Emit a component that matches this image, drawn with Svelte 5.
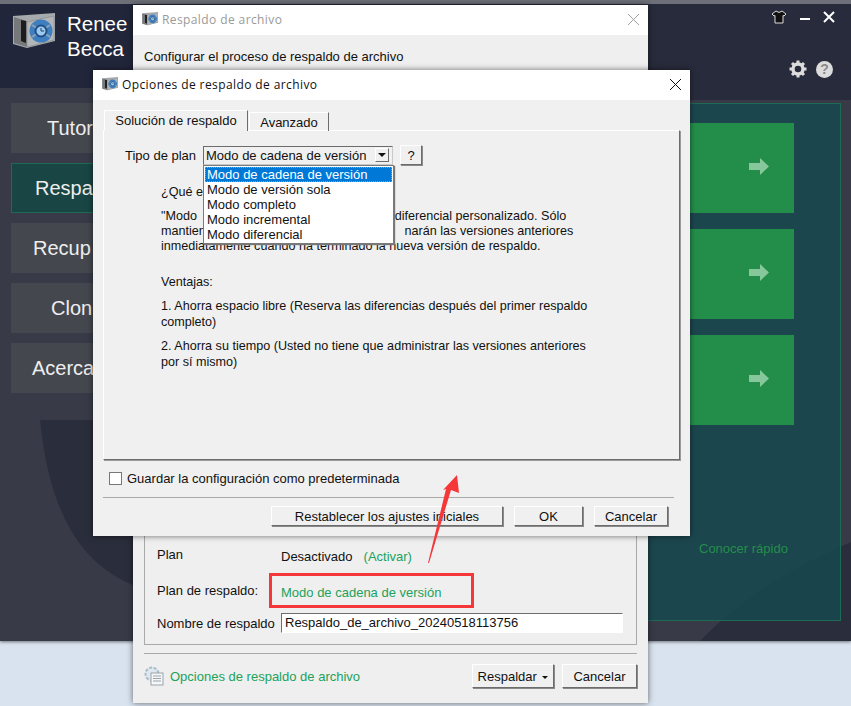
<script>
  // Backup app with two stacked option dialogs and an open plan dropdown.
  const menu = [
    { label: 'Tutor', pad: 36 },
    { label: 'Respa', pad: 24, active: true },
    { label: 'Recup', pad: 22 },
    { label: 'Clon', pad: 40 },
    { label: 'Acerca', pad: 21 }
  ];
  const planModes = [
    'Modo de cadena de versión',
    'Modo de versión sola',
    'Modo completo',
    'Modo incremental',
    'Modo diferencial'
  ];
  let selected = $state(planModes[0]);
</script>

{#snippet safeIcon(width)}
  <svg class="safe" {width} height={width * 35 / 42} viewBox="0 0 42 35" aria-hidden="true">
    <path d="M0 3 L42 0 V28 L14 35 L0 31 Z" fill="#a7aaad" />
    <path d="M1 4 L14 8 V34 L1 30 Z" fill="#77787a" />
    <path d="M8 7 L13 8 V30 L8 28 Z" fill="#1c1c1c" />
    <path d="M14 9 L41 3 V27 L14 34 Z" fill="#b3b6b9" stroke="#84878a" stroke-width="0.6" />
    <circle cx="28" cy="18" r="11.5" fill="#3f7fc0" />
    <path d="M19 12 L37 24 M37 12 L19 24" stroke="#8fa3b7" stroke-width="2" />
    <circle cx="28" cy="18" r="5.5" fill="#9ecaf0" stroke="#1f4f84" stroke-width="2" />
    <path d="M28 15 V18 H31" stroke="#1d3f66" fill="none" />
  </svg>
{/snippet}

<div class="screen">
  <div class="app">
    <svg class="backdrop" width="851" height="641" viewBox="0 0 851 641" aria-hidden="true">
      <rect width="851" height="88" fill="#22263a" />
      <rect y="88" width="851" height="553" fill="#383b47" />
      <path d="M40 420 C50 520 85 565 133 585 L220 641 H500 V420 Z" fill="#2a2d3b" />
      <path d="M700 641 C750 590 800 565 851 542 V641 Z" fill="#2a2d3b" />
      <rect x="600" width="251" height="100" fill="#282b3b" />
      <rect width="851" height="4" fill="#6d7079" />
    </svg>

    <div class="brand">
      {@render safeIcon(42)}
      <div class="brand-name">Renee<br />Becca</div>
    </div>

    <div class="window-tools">
      <svg width="16" height="14" viewBox="0 0 16 14" aria-hidden="true">
        <path d="M5 1 L8 2.5 L11 1 L15 4 L13 6 L12 5.5 V13 H4 V5.5 L3 6 L1 4 Z" fill="#111" stroke="#ddd" stroke-width="1" />
      </svg>
      <svg width="12" height="12" viewBox="0 0 12 12" aria-hidden="true">
        <rect x="1" y="7" width="10" height="2" fill="#fff" />
      </svg>
      <svg width="12" height="12" viewBox="0 0 12 12" aria-hidden="true">
        <path d="M1 1 L11 11 M11 1 L1 11" stroke="#fff" stroke-width="2" />
      </svg>
    </div>

    <div class="app-tools">
      <svg width="18" height="18" viewBox="0 0 18 18" aria-hidden="true">
        <circle cx="9" cy="9" r="5" fill="none" stroke="#dcdcdc" stroke-width="3.4" />
        <path d="M9 0.5 V4 M9 14 V17.5 M0.5 9 H4 M14 9 H17.5 M3 3 L5.4 5.4 M12.6 12.6 L15 15 M15 3 L12.6 5.4 M5.4 12.6 L3 15" stroke="#dcdcdc" stroke-width="3" />
      </svg>
      <div class="help-dot">?</div>
    </div>

    <nav class="side-menu">
      {#each menu as item}
        <div class="menu-item" class:active={item.active} style="padding-left: {item.pad}px">{item.label}</div>
      {/each}
    </nav>

    <section class="tiles-panel">
      <div class="tile-list">
        {#each [0, 1, 2] as tile (tile)}
          <div class="tile">
            <svg width="20" height="17" viewBox="0 0 20 17" aria-hidden="true">
              <path d="M0 5 H11 V0 L20 8.5 L11 17 V12 H0 Z" fill="#86c79b" />
            </svg>
          </div>
        {/each}
      </div>
      <div class="quick-link">Conocer rápido</div>
    </section>
  </div>

  <div class="win back-win">
    <header class="titlebar">
      {@render safeIcon(16)}
      <span class="title muted">Respaldo de archivo</span>
      <svg class="close" width="13" height="13" viewBox="0 0 13 13" aria-hidden="true">
        <path d="M1 1 L12 12 M12 1 L1 12" stroke="#a0a0a0" />
      </svg>
    </header>
    <div class="back-body">
      <p class="back-heading">Configurar el proceso de respaldo de archivo</p>
      <div class="groupbox">
        <div class="field plan-row"><span>Plan</span><span class="off">Desactivado</span><span class="link activate">(Activar)</span></div>
        <div class="field scheme-row"><span>Plan de respaldo:</span><span class="link">Modo de cadena de versión</span></div>
        <div class="field name-row"><span>Nombre de respaldo</span><div class="name-input">Respaldo_de_archivo_20240518113756</div></div>
      </div>
      <footer class="back-foot">
        <svg width="20" height="20" viewBox="0 0 20 20" aria-hidden="true">
          <circle cx="8" cy="8" r="6.5" fill="#dfe8f0" stroke="#a9bccb" stroke-width="2" stroke-dasharray="3 1.5" />
          <rect x="7" y="7" width="12" height="12" fill="#f5f7f8" stroke="#9aa3a8" />
          <path d="M9 10 H17 M9 12.5 H17 M9 15 H17" stroke="#9aa3a8" />
        </svg>
        <span class="link foot-link">Opciones de respaldo de archivo</span>
        <button class="btn backup-btn" type="button">Respaldar <i class="caret"></i></button>
        <button class="btn back-cancel" type="button">Cancelar</button>
      </footer>
    </div>
  </div>

  <div class="win dialog">
    <header class="titlebar">
      {@render safeIcon(16)}
      <span class="title">Opciones de respaldo de archivo</span>
      <svg class="close" width="13" height="13" viewBox="0 0 13 13" aria-hidden="true">
        <path d="M1 1 L12 12 M12 1 L1 12" stroke="#111" />
      </svg>
    </header>
    <div class="dialog-body">
      <div class="tabs">
        <div class="tab current">Solución de respaldo</div>
        <div class="tab">Avanzado</div>
      </div>
      <div class="tab-panel">
        <div class="plan-picker">
          <span class="plan-label">Tipo de plan</span>
          <div class="combo">
            <span>{selected}</span>
            <span class="combo-arrow"><i></i></span>
            <ul class="combo-list">
              {#each planModes as mode}
                <li class:picked={mode === selected}>{mode}</li>
              {/each}
            </ul>
          </div>
          <button class="btn help-btn" type="button">?</button>
        </div>
        <!-- the parts marked .under-list sit behind the open dropdown -->
        <div class="explain">
          <p class="q">¿Qué e<span class="under-list">s Modo de cadena de versión?</span></p>
          <p class="para">"Modo<span class="under-list"> de cadena de versión" es un mod</span>o diferencial personalizado. Sólo<br />mantien<span class="under-list">e las últimas cinco versiones. Se eli</span>narán las versiones anteriores<br />inmediatamente cuando ha terminado la nueva versión de respaldo.</p>
          <p class="adv">Ventajas:</p>
          <p class="item">1. Ahorra espacio libre (Reserva las diferencias después del primer respaldo<br />completo)</p>
          <p class="item">2. Ahorra su tiempo (Usted no tiene que administrar las versiones anteriores<br />por sí mismo)</p>
        </div>
      </div>
      <label class="remember"><i class="check"></i>Guardar la configuración como predeterminada</label>
      <div class="dialog-actions">
        <button class="btn reset-btn" type="button">Restablecer los ajustes iniciales</button>
        <button class="btn ok-btn" type="button">OK</button>
        <button class="btn cancel-btn" type="button">Cancelar</button>
      </div>
    </div>
  </div>

  <!-- annotation layer drawn over the screenshot -->
  <div class="note-box"></div>
  <svg class="note-arrow" width="60" height="110" viewBox="0 0 60 110" aria-hidden="true">
    <path d="M37 7 L39 25 L31 22 L9 95 L8 95 L26 21 L23 22 Z" fill="#f5373a" />
  </svg>
</div>

<style>
  :global(body) {
    margin: 0;
  }
  .screen {
    position: relative;
    width: 851px;
    height: 706px;
    overflow: hidden;
    background: #d9e3ef;
    font-family: "Liberation Sans", Arial, sans-serif;
    font-size: 13px;
    color: #111;
  }
  .app {
    position: absolute;
    left: 0;
    top: 0;
    width: 851px;
    height: 641px;
    box-shadow: 0 1px 3px rgba(0, 0, 0, 0.5);
  }
  .backdrop {
    position: absolute;
    left: 0;
    top: 0;
  }
  .brand {
    position: absolute;
    left: 13px;
    top: 13px;
    display: flex;
    gap: 12px;
  }
  .brand-name {
    color: #fff;
    font-size: 20.5px;
    line-height: 25px;
    margin-top: -2px;
  }
  .window-tools {
    position: absolute;
    right: 16px;
    top: 10px;
    display: flex;
    align-items: center;
    gap: 12px;
  }
  .app-tools {
    position: absolute;
    left: 789px;
    top: 60px;
    display: flex;
    align-items: center;
    gap: 9px;
  }
  .help-dot {
    width: 17px;
    height: 17px;
    border-radius: 50%;
    background: #dcdcdc;
    color: #8a8a8a;
    font-size: 14px;
    font-weight: bold;
    line-height: 17px;
    text-align: center;
  }
  .side-menu {
    position: absolute;
    left: 11px;
    top: 103px;
    display: flex;
    flex-direction: column;
    gap: 10px;
    width: 130px;
  }
  .menu-item {
    box-sizing: border-box;
    height: 50px;
    line-height: 50px;
    background: #45474f;
    color: #eee;
    font-size: 20px;
  }
  .menu-item.active {
    background: #194545;
    outline: 1px solid #1f6b52;
    outline-offset: -1px;
  }
  .tiles-panel {
    position: absolute;
    left: 640px;
    top: 103px;
    box-sizing: border-box;
    width: 201px;
    height: 518px;
    background: rgba(21, 74, 80, 0.8);
    border: 1px solid #1d6a55;
    padding-top: 19px;
  }
  .tile-list {
    display: flex;
    flex-direction: column;
    gap: 16px;
  }
  .tile {
    box-sizing: border-box;
    width: 153px;
    height: 90px;
    background: #238e49;
    display: flex;
    align-items: center;
    justify-content: flex-end;
    padding: 0 25px 3px 0;
  }
  .quick-link {
    margin: 116px 0 0 58px;
    color: #238e49;
  }
  .win {
    position: absolute;
    background: #efefef;
    box-shadow: 0 0 6px rgba(0, 0, 0, 0.55);
  }
  .back-win {
    left: 133px;
    top: 5px;
    width: 515px;
    height: 698px;
  }
  .dialog {
    left: 93px;
    top: 70px;
    width: 597px;
    height: 466px;
    background: #f0f0f0;
  }
  .titlebar {
    box-sizing: border-box;
    height: 30px;
    background: #fff;
    display: flex;
    align-items: center;
    padding: 0 8px 2px 9px;
    gap: 4px;
  }
  .title {
    font-family: "Open Sans", sans-serif;
    font-size: 12px;
    letter-spacing: 0.4px;
  }
  .title.muted {
    color: #9a9a9a;
  }
  .close {
    margin-left: auto;
  }
  .back-body {
    padding: 14px 11px 0;
    box-sizing: border-box;
  }
  .back-heading {
    margin: 0;
    line-height: 16px;
  }
  .groupbox {
    box-sizing: border-box;
    height: 560px;
    margin-top: 20px;
    border: 1px solid #a9a9a9;
    padding: 0 12px;
    display: flex;
    flex-direction: column;
    justify-content: flex-end;
    width: 493px;
  }
  .field {
    display: flex;
    align-items: center;
  }
  .field > span:first-child {
    width: 124px;
  }
  .plan-row {
    height: 20px;
    margin-bottom: 16px;
  }
  .off {
    margin-top: 4px;
  }
  .activate {
    margin: 4px 0 0 11px;
  }
  .scheme-row {
    height: 20px;
    margin-bottom: 13px;
  }
  .scheme-row .link {
    margin-top: 4px;
  }
  .name-row {
    margin-bottom: 11px;
  }
  .link {
    color: #21a25a;
  }
  .name-input {
    box-sizing: border-box;
    width: 342px;
    height: 20px;
    background: #fff;
    border: 1px solid;
    border-color: #6e6e6e #fff #fff #6e6e6e;
    padding-left: 3px;
    line-height: 18px;
  }
  .back-foot {
    margin-top: 8px;
    border-top: 1px solid #a9a9a9;
    width: 493px;
    height: 44px;
    display: flex;
    align-items: center;
    gap: 6px;
  }
  .foot-link {
    flex: 1;
  }
  .btn {
    box-sizing: border-box;
    font: inherit;
    color: #111;
    background: #f0f0f0;
    padding: 0;
    border: 1px solid;
    border-color: #fff #6c6c6c #6c6c6c #fff;
    box-shadow: 1px 1px 0 #8a8a8a;
    height: 20px;
  }
  .backup-btn {
    width: 82px;
    height: 24px;
    margin-right: 2px;
  }
  .back-cancel {
    width: 75px;
    height: 24px;
  }
  .caret {
    display: inline-block;
    width: 0;
    height: 0;
    border: 3px solid transparent;
    border-top-color: #111;
    border-bottom: 0;
    margin: 0 0 2px 2px;
  }
  .dialog-body {
    padding: 11px 10px 0;
  }
  .tabs {
    display: flex;
    align-items: flex-end;
    height: 20px;
    padding-left: 1px;
    position: relative;
    z-index: 1;
    margin-bottom: -1px;
  }
  .tab {
    box-sizing: border-box;
    height: 19px;
    width: 80px;
    text-align: center;
    line-height: 19px;
    border: 1px solid #fff;
    border-right: 1px solid #6c6c6c;
    border-bottom: 0;
    margin-left: 1px;
  }
  .tab.current {
    width: 144px;
    height: 21px;
    margin-left: 0;
    background: #f0f0f0;
  }
  .tab-panel {
    box-sizing: border-box;
    width: 577px;
    height: 330px;
    border: 1px solid;
    border-color: #fff #6c6c6c #6c6c6c #fff;
    box-shadow: 1px 1px 0 #9a9a9a;
    padding: 14px 0 0 21px;
  }
  .plan-picker {
    display: flex;
    align-items: center;
    height: 20px;
  }
  .plan-label {
    width: 78px;
  }
  .combo {
    position: relative;
    box-sizing: border-box;
    width: 190px;
    height: 19px;
    border: 1px solid;
    border-color: #6c6c6c #c8c8c8 #c8c8c8 #6c6c6c;
    display: flex;
    align-items: center;
    padding-left: 2px;
  }
  .combo-arrow {
    margin-left: auto;
    margin-right: 3px;
    width: 14px;
    height: 14px;
    border: 1px solid;
    border-color: #fff #6c6c6c #6c6c6c #fff;
    box-sizing: border-box;
    display: flex;
    align-items: center;
    justify-content: center;
  }
  .combo-arrow i {
    width: 0;
    height: 0;
    border: 4px solid transparent;
    border-top-color: #111;
    border-bottom: 0;
  }
  .combo-list {
    position: absolute;
    left: -1px;
    top: 18px;
    z-index: 3;
    box-sizing: border-box;
    width: 191px;
    height: 79px;
    margin: 0;
    padding: 1px;
    list-style: none;
    background: #fff;
    border: 1px solid #7a7a7a;
    box-shadow: 1px 1px 1px #777;
  }
  .combo-list li {
    height: 15px;
    line-height: 15px;
    padding-left: 2px;
    white-space: nowrap;
  }
  .combo-list li.picked {
    background: #0078d7;
    color: #fff;
    outline: 1px dotted #c79a5a;
    outline-offset: -1px;
  }
  .help-btn {
    width: 22px;
    margin-left: 7px;
  }
  .explain {
    margin-left: 36px;
    font-size: 12.6px;
    line-height: 15px;
  }
  .explain p {
    margin: 0;
    white-space: nowrap;
  }
  .under-list {
    visibility: hidden;
  }
  .q {
    padding-top: 20px;
  }
  .para {
    padding-top: 9px;
  }
  .adv {
    padding-top: 21px;
  }
  .item {
    padding-top: 8px;
    line-height: 16px;
  }
  .remember {
    display: flex;
    align-items: center;
    gap: 5px;
    margin: 11px 0 0 6px;
    height: 15px;
  }
  .check {
    box-sizing: border-box;
    width: 13px;
    height: 13px;
    background: #fff;
    border: 1px solid #777;
  }
  .dialog-actions {
    border-top: 1px solid #a9a9a9;
    margin-top: 11px;
    width: 571px;
    padding-top: 8px;
    display: flex;
    justify-content: flex-end;
    gap: 11px;
  }
  .reset-btn {
    width: 232px;
  }
  .ok-btn {
    width: 69px;
  }
  .cancel-btn {
    width: 74px;
    margin-right: 6px;
  }
  .note-box {
    position: absolute;
    left: 269px;
    top: 573px;
    box-sizing: border-box;
    width: 205px;
    height: 35px;
    border: 3px solid #f5373a;
  }
  .note-arrow {
    position: absolute;
    left: 420px;
    top: 468px;
  }
</style>
